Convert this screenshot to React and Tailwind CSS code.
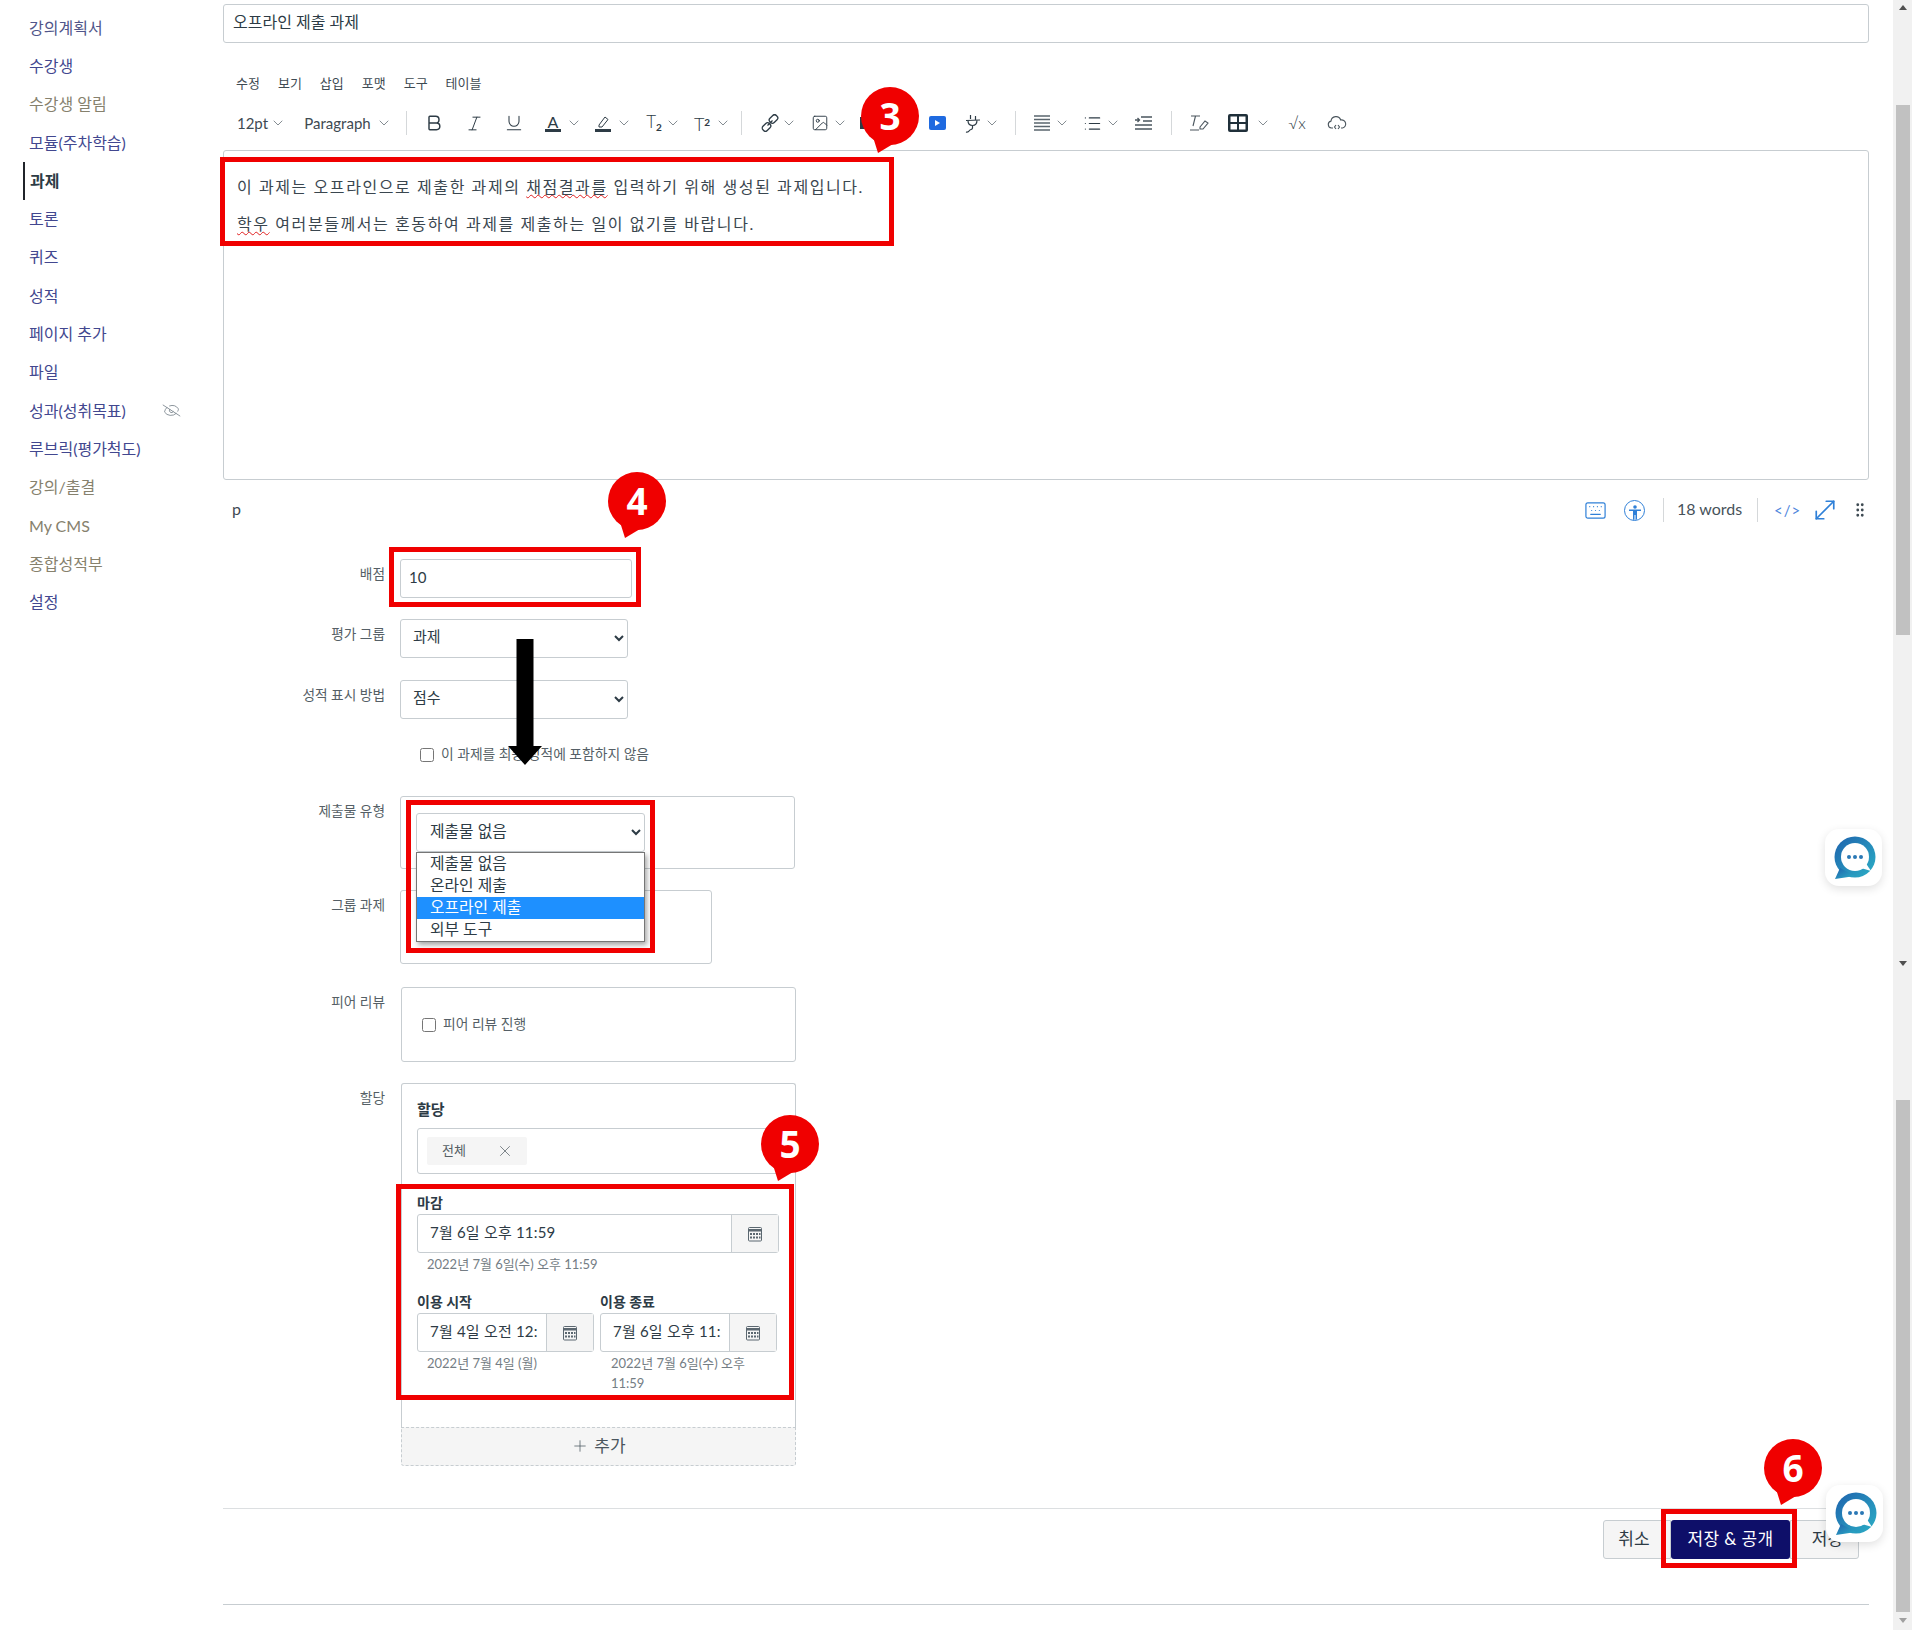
import { Bold, ChevronDown, Italic, Underline, Image, List, EyeOff, Keyboard, MoveDiagonal, GripVertical, X, Plus } from "lucide-react";

const navItems = [
  { label: "강의계획서", color: "text-[#50558a]" },
  { label: "수강생", color: "text-[#42478f]" },
  { label: "수강생 알림", color: "text-[#86816d]" },
  { label: "모듈(주차학습)", color: "text-[#42478f]" },
  { label: "과제", active: true },
  { label: "토론", color: "text-[#42478f]" },
  { label: "퀴즈", color: "text-[#42478f]" },
  { label: "성적", color: "text-[#42478f]" },
  { label: "페이지 추가", color: "text-[#42478f]" },
  { label: "파일", color: "text-[#42478f]" },
  { label: "성과(성취목표)", color: "text-[#42478f]", hidden: true },
  { label: "루브릭(평가척도)", color: "text-[#42478f]" },
  { label: "강의/출결", color: "text-[#86816d]" },
  { label: "My CMS", color: "text-[#86816d]" },
  { label: "종합성적부", color: "text-[#86816d]" },
  { label: "설정", color: "text-[#42478f]" },
];

const menus = ["수정", "보기", "삽입", "포맷", "도구", "테이블"];

// small thin chevron used everywhere in the editor toolbar
const Chev = ({ className }) => (
  <span className={`flex h-full w-[12px] items-center justify-center ${className}`}>
    <ChevronDown size={16} strokeWidth={1} className="shrink-0 text-[#46525a]" />
  </span>
);

const Tool = ({ className, children }) => (
  <span className={`flex h-full w-[20px] items-center justify-center text-[#2d3b45] ${className}`}>{children}</span>
);

const Sep = ({ className }) => <span className={`h-[24px] w-px self-center bg-[#d5d8da] ${className}`} />;

const CalendarIcon = () => (
  <svg width="16" height="16" viewBox="0 0 16 16" className="text-[#5b6770]">
    <rect x="1.500" y="1.500" width="13" height="13.500" rx="1" fill="none" stroke="currentColor" />
    <rect x="1" y="3" width="14" height="2.500" fill="currentColor" />
    <path d="M3 7h2v2H3zM6 7h2v2H6zM9 7h2v2H9zM12 7h1.500v2H12zM3 10.500h2v2H3zM6 10.500h2v2H6zM9 10.500h2v2H9zM12 10.500h1.500v2H12z" fill="currentColor" />
  </svg>
);

const DateField = ({ value, className, btn }) => (
  <div className={`flex h-[39px] rounded-[3px] border border-[#c7cdd1] ${className}`}>
    <div className="flex min-w-0 flex-1 items-center overflow-hidden whitespace-nowrap pb-[2px] pl-[12px] text-[15px] tracking-[0.2px] text-[#2d3b45]">{value}</div>
    <div className={`flex items-center justify-center border-l border-[#c7cdd1] bg-[#f5f5f5] ${btn}`}>
      <CalendarIcon />
    </div>
  </div>
);

const Row = ({ label, className, children }) => (
  <div className={`flex ${className}`}>
    <div className="w-[162px] shrink-0 pt-[5px] text-right text-[13.7px] leading-[20px] text-[#555f66]">{label}</div>
    <div className="ml-[15px]">{children}</div>
  </div>
);

// numbered red speech bubble from the guide annotations
const Badge = ({ n, className }) => (
  <div className={`absolute z-30 h-[66px] w-[58px] ${className}`}>
    <svg width="58" height="66" viewBox="0 0 58 66" className="absolute left-0 top-0">
      <circle cx="29" cy="29" r="29" fill="#f00000" />
      <path d="M12 50L17 66L32 57Z" fill="#f00000" />
    </svg>
    <span className="absolute inset-x-0 top-0 flex h-[58px] items-center justify-center font-['Open_Sans',sans-serif] text-[37px] font-bold text-white">{n}</span>
  </div>
);

const RedBox = ({ className }) => <div className={`absolute z-20 border-[5px] border-[#f00000] ${className}`} />;

const ChatBubble = ({ id, className }) => (
  <div className={`absolute z-40 flex h-[57px] w-[57px] items-center justify-center rounded-[14px] bg-white shadow-[0_3px_10px_rgba(0,0,0,0.12)] ${className}`}>
    <svg width="46" height="46" viewBox="0 0 46 46">
      <defs>
        <linearGradient id={id} x1="0" y1="0" x2="1" y2="1">
          <stop offset="0" stopColor="#1e62ad" />
          <stop offset="1" stopColor="#2cb0c6" />
        </linearGradient>
      </defs>
      <circle cx="24" cy="22" r="20.500" fill={`url(#${id})`} />
      <path d="M9 33L4 44L24 41Z" fill={`url(#${id})`} />
      <circle cx="24" cy="22" r="14" fill="#fff" />
      <path d="M30 33L40 36L34 27Z" fill="#fff" />
      <circle cx="18" cy="22" r="2" fill="#2a78b5" />
      <circle cx="24" cy="22" r="2" fill="#2a78b5" />
      <circle cx="30" cy="22" r="2" fill="#2a78b5" />
    </svg>
  </div>
);

const App = () => {
  return (
    <div className="relative flex h-[1630px] w-[1912px] overflow-hidden bg-white font-[Lato,'Noto_Sans_CJK_KR',sans-serif] text-[#2d3b45]">
      {/* course nav */}
      <nav className="w-[223px] shrink-0 pl-[23px] pt-[8.5px]">
        {navItems.map((item) => (
          <div
            key={item.label}
            className={`flex h-[38.3px] w-[157px] items-center justify-between text-[16px] ${
              item.active ? "border-l-2 border-[#20242a] pl-[5px] font-bold text-[#2d3b45]" : `pl-[6px] ${item.color}`
            }`}
          >
            <span>{item.label}</span>
            {item.hidden && <EyeOff size={17} strokeWidth={1} className="-rotate-12 text-[#6b7780]" />}
          </div>
        ))}
      </nav>

      <main className="w-[1646px] shrink-0">
        <div className="mt-[4px] flex h-[39px] items-center rounded-[3px] border border-[#c7cdd1] pb-[3px] pl-[9px] text-[16px]">오프라인 제출 과제</div>

        <div className="ml-[13px] mt-[31px] flex h-[20px] items-center gap-[18px] text-[13px] text-[#3e4a52]">
          {menus.map((m) => (
            <span key={m}>{m}</span>
          ))}
        </div>

        {/* editor toolbar */}
        <div className="ml-[9px] mt-[14px] flex h-[30px] items-center text-[15px] text-[#3e4a52]">
          <span className="w-[40px] pl-[1px] text-center">12pt</span>
          <Chev />
          <span className="ml-[18px] w-[71px] text-center">Paragraph</span>
          <Chev className="ml-[5px]" />
          <Sep className="ml-[16px]" />
          <Tool className="ml-[17px]"><Bold size={22} strokeWidth={1.75} /></Tool>
          <Tool className="ml-[20px]"><Italic size={19} strokeWidth={1.25} /></Tool>
          <Tool className="ml-[20px]"><Underline size={20} strokeWidth={1.25} /></Tool>
          <Tool className="ml-[19px]">
            <span className="flex flex-col items-center text-[16px] leading-[15px]">
              A<span className="h-[3px] w-[16px] bg-[#2d3b45]" />
            </span>
          </Tool>
          <Chev className="ml-[5px]" />
          <Tool className="ml-[13px]">
            <svg width="18" height="18" viewBox="0 0 18 18" fill="none" stroke="#2d3b45">
              <path d="M5 11L11 3l3 2.500L8 13H5z" />
              <rect x="1" y="15" width="16" height="3" fill="#2d3b45" stroke="none" />
            </svg>
          </Tool>
          <Chev className="ml-[5px]" />
          <Tool className="ml-[14px]">
            <span className="-mt-[3px] text-[17px] font-light leading-none">T<sub className="text-[10px] font-bold">2</sub></span>
          </Tool>
          <Chev className="ml-[3px]" />
          <Tool className="ml-[13px]">
            <span className="mt-[2px] text-[18px] font-light leading-none">T<sup className="text-[10px] font-bold">2</sup></span>
          </Tool>
          <Chev className="ml-[5px]" />
          <Sep className="ml-[12px]" />
          <Tool className="ml-[18px]">
            <svg width="18" height="18" viewBox="0 0 18 18" fill="none" stroke="#2d3b45" strokeWidth="1.300">
              <rect x="9.500" y="0.500" width="6" height="9" rx="2.500" transform="rotate(45 12.500 5)" />
              <rect x="2.500" y="8.500" width="6" height="9" rx="2.500" transform="rotate(45 5.500 13)" />
              <path d="M6.500 11.500l5-5" />
            </svg>
          </Tool>
          <Chev className="ml-[3px]" />
          <Tool className="ml-[15px]"><Image size={18} strokeWidth={1.25} /></Tool>
          <Chev className="ml-[4px]" />
          <Tool className="ml-[12px]"><span className="h-[12px] w-[16px] bg-[#2d3b45]" /></Tool>
          <Tool className="ml-[49px]">
            <span className="flex h-[14px] w-[17px] items-center justify-center rounded-[2px] bg-[#1f6ae0]">
              <span className="border-y-[3px] border-l-[5px] border-y-transparent border-l-white" />
            </span>
          </Tool>
          <Tool className="ml-[15px]">
            <svg width="18" height="19" viewBox="0 0 18 19" fill="none" stroke="#2d3b45" strokeWidth="1.200">
              <path d="M7.500 1v4M12.500 2v4M3 6.500l14-0.500M5 6.500c0 3 1.500 5 4.500 5s4.500-2 4.500-5.500M9.500 11.500v2.500c0 2-2 1-3 2.500s-2 2-3.500 1.500" />
            </svg>
          </Tool>
          <Chev className="ml-[4px]" />
          <Sep className="ml-[17px]" />
          <Tool className="ml-[16px]">
            <svg width="18" height="16" viewBox="0 0 18 16" stroke="#5a656d" strokeWidth="1.300">
              <path d="M1 1h16M1 4.500h16M1 8h16M1 11.500h16M1 15h16" />
            </svg>
          </Tool>
          <Chev className="ml-[4px]" />
          <Tool className="ml-[14px]"><List size={19} strokeWidth={1.5} /></Tool>
          <Chev className="ml-[5px]" />
          <Tool className="ml-[14px]">
            <svg width="18" height="14" viewBox="0 0 18 14" fill="none" stroke="#4a555d" strokeWidth="1.300">
              <path d="M7 1h11M9 5h9M1 9h17M1 13h17M1 4h4M3.500 2l2 2-2 2" />
            </svg>
          </Tool>
          <Sep className="ml-[18px]" />
          <Tool className="ml-[17px]">
            <svg width="20" height="18" viewBox="0 0 20 18" fill="none" stroke="#4a555d" strokeWidth="1.100">
              <path d="M2 2h9M6.500 2L4 12M1 16h9M11 13l5-6 3 2-5 6h-3z" />
            </svg>
          </Tool>
          <Tool className="ml-[19px]">
            <svg width="20" height="18" viewBox="0 0 20 18">
              <rect width="20" height="18" rx="2" fill="#20303a" />
              <path d="M2.500 2.500h6.500V8H2.500zM11 2.500h6.500V8H11zM2.500 10H9v5.500H2.500zM11 10h6.500v5.500H11z" fill="#fff" />
            </svg>
          </Tool>
          <Chev className="ml-[9px]" />
          <Tool className="ml-[18px]"><span className="text-[16px] font-light">√x</span></Tool>
          <Tool className="ml-[20px]">
            <svg width="20" height="17" viewBox="0 0 20 17" fill="none" stroke="#4a555d" strokeWidth="1.100">
              <path d="M6 13H4.500A3.500 3.500 0 0 1 4 6.100 5 5 0 0 1 13.700 5 3.500 3.500 0 0 1 15.500 13H14" />
              <path d="M9 10l-1.500 2L9 14M11 10l1.500 2L11 14" />
            </svg>
          </Tool>
        </div>

        {/* editor body */}
        <div className="mt-[12px] h-[330px] rounded-[3px] border border-[#c7cdd1] pl-[13px] pt-[21px] text-[16px] leading-[30px] tracking-[1.58px] text-[#3a464f]">
          <p className="mb-[7px]">
            이 과제는 오프라인으로 제출한 과제의 <span className="underline decoration-[#e02020] decoration-wavy decoration-1">채점결과를</span> 입력하기 위해 생성된 과제입니다.
          </p>
          <p>
            <span className="underline decoration-[#e02020] decoration-wavy decoration-1">학우</span> 여러분들께서는 혼동하여 과제를 제출하는 일이 없기를 바랍니다.
          </p>
        </div>

        {/* status bar */}
        <div className="mt-[15px] flex h-[30px] items-center text-[#2f80d8]">
          <span className="ml-[9px] pb-[3px] text-[16px] text-[#3e4a52]">p</span>
          <div className="ml-auto flex items-center">
            <Keyboard size={23} strokeWidth={1.25} />
            <span className="ml-[17px] flex h-[21px] w-[21px] items-end justify-center overflow-hidden rounded-full border-[1.5px] border-[#2f80d8]">
              <svg width="14" height="16" viewBox="0 0 14 16" fill="#2f80d8">
                <circle cx="7" cy="3" r="1.800" />
                <path d="M1 5.500h12v1.500H9v9H7.500v-5h-1v5H5V7H1z" />
              </svg>
            </span>
            <Sep className="ml-[18px]" />
            <span className="ml-[13px] w-[67px] whitespace-nowrap pb-[2px] text-[16px] text-[#47525a]">18 words</span>
            <Sep className="ml-[13px]" />
            <span className="ml-[16px] w-[26px] text-center text-[15px] tracking-[1px] text-[#4f86dd]">&lt;/&gt;</span>
            <MoveDiagonal size={30} strokeWidth={1.35} className="ml-[10px]" />
            <GripVertical size={18} strokeWidth={1.75} className="ml-[11px] text-[#3e4a52]" />
          </div>
        </div>

        {/* assignment form */}
        <Row label="배점" className="mt-[34px]">
          <div className="flex h-[39px] w-[232px] items-center rounded-[3px] border border-[#c7cdd1] pb-[2px] pl-[8px] text-[15px]">10</div>
        </Row>
        <Row label="평가 그룹" className="mt-[21px]">
          <select defaultValue="과제" className="h-[39px] w-[228px] rounded-[3px] border border-[#c7cdd1] bg-white pb-[6px] pl-[8px] text-[15px] text-[#2d3b45]">
            <option>과제</option>
          </select>
        </Row>
        <Row label="성적 표시 방법" className="mt-[22px]">
          <select defaultValue="점수" className="h-[39px] w-[228px] rounded-[3px] border border-[#c7cdd1] bg-white pb-[6px] pl-[8px] text-[15px] text-[#2d3b45]">
            <option>점수</option>
          </select>
        </Row>
        <div className="ml-[197px] mt-[29px] flex h-[13px] items-center">
          <input type="checkbox" className="m-0 h-[14px] w-[14px]" />
          <span className="ml-[7px] text-[13.8px] text-[#555f66]">이 과제를 최종 성적에 포함하지 않음</span>
        </div>

        <Row label="제출물 유형" className="mt-[35px]">
          <div className="relative h-[73px] w-[395px] rounded-[3px] border border-[#c7cdd1] pl-[15px] pt-[16px]">
            <select defaultValue="제출물 없음" className="h-[39px] w-[229px] rounded-[3px] border border-[#c7cdd1] bg-white pb-[4px] pl-[9px] text-[15.8px] text-[#2d3b45]">
              <option>제출물 없음</option>
            </select>
            {/* opened select list */}
            <div className="absolute left-[15px] top-[55px] z-10 w-[229px] border border-[#767676] bg-white text-[15.8px] leading-[20px] shadow-[2px_3px_5px_rgba(0,0,0,0.35)]">
              <div className="h-[22px] pl-[13px]">제출물 없음</div>
              <div className="h-[22px] pl-[13px]">온라인 제출</div>
              <div className="h-[22px] bg-[#1e90ff] pl-[13px] text-white">오프라인 제출</div>
              <div className="h-[22px] pl-[13px]">외부 도구</div>
            </div>
          </div>
        </Row>
        <Row label="그룹 과제" className="mt-[21px]">
          <div className="h-[74px] w-[312px] rounded-[3px] border border-[#c7cdd1]" />
        </Row>
        <Row label="피어 리뷰" className="mt-[23px]">
          <div className="ml-px flex h-[75px] w-[395px] items-center rounded-[3px] border border-[#c7cdd1] pl-[20px]">
            <input type="checkbox" className="m-0 h-[14px] w-[14px]" />
            <span className="ml-[7px] text-[13.8px] text-[#555f66]">피어 리뷰 진행</span>
          </div>
        </Row>
        <Row label="할당" className="mt-[21px]">
          <div className="ml-px w-[395px]">
            <div className="h-[344px] rounded-t-[3px] border border-b-0 border-[#c7cdd1] px-[15px] pt-[15px]">
              <div className="h-[20px] text-[15px] font-bold leading-[20px]">할당</div>
              <div className="mt-[9px] flex h-[46px] w-[362px] items-center rounded-[3px] border border-[#c7cdd1] pl-[9px]">
                <div className="flex h-[28px] w-[100px] items-center justify-between rounded-[2px] bg-[#f5f5f5] pl-[15px] pr-[13px] text-[13px] text-[#555f66]">
                  전체
                  <X size={18} strokeWidth={1} />
                </div>
              </div>
              <div className="mt-[21px] h-[16px] text-[14px] font-bold leading-[16px]">마감</div>
              <DateField value="7월 6일 오후 11:59" className="mt-[3px] w-[362px]" btn="w-[47px]" />
              <div className="mt-[3px] pl-[10px] text-[13px] leading-[16px] text-[#747d84]">2022년 7월 6일(수) 오후 11:59</div>
              <div className="mt-[22px] flex items-start gap-[6px]">
                <div className="w-[177px]">
                  <div className="h-[16px] text-[14px] font-bold leading-[16px]">이용 시작</div>
                  <DateField value="7월 4일 오전 12:" className="mt-[3px]" btn="w-[47px]" />
                  <div className="mt-[1px] pl-[10px] text-[13px] leading-[20px] text-[#747d84]">2022년 7월 4일 (월)</div>
                </div>
                <div className="w-[177px]">
                  <div className="h-[16px] text-[14px] font-bold leading-[16px]">이용 종료</div>
                  <DateField value="7월 6일 오후 11:" className="mt-[3px]" btn="w-[47px]" />
                  <div className="mt-[1px] pl-[11px] text-[13px] leading-[20px] text-[#747d84]">2022년 7월 6일(수) 오후 11:59</div>
                </div>
              </div>
            </div>
            <div className="flex h-[39px] items-center justify-center gap-[5px] rounded-b-[3px] border border-dashed border-[#c7cdd1] bg-[#f5f5f5] pb-[2px] text-[17px] text-[#4a555d]">
              <Plus size={18} strokeWidth={1} />
              추가
            </div>
          </div>
        </Row>

        <div className="mt-[42px] h-px bg-[#dcdfe1]" />
        <div className="mt-[11px] flex justify-end pr-[10px]">
          <button className="h-[39px] w-[68px] rounded-l-[3px] border border-[#c7cdd1] bg-[#f5f5f5] pb-[2px] pr-[6px] text-[17px] text-[#2d3b45]">취소</button>
          <button className="h-[39px] w-[119px] rounded-[3px] bg-[#0e0f69] pb-[2px] text-[17px] tracking-[0.4px] text-white">저장 & 공개</button>
          <button className="h-[39px] w-[69px] rounded-r-[3px] border border-[#c7cdd1] bg-[#f5f5f5] pb-[2px] pl-[6px] text-[17px] text-[#2d3b45]">저장</button>
        </div>
        <div className="mt-[45px] h-px bg-[#c7cdd1]" />
      </main>

      {/* browser scrollbar */}
      <div className="ml-[24px] flex h-[1630px] w-[19px] shrink-0 flex-col items-center bg-[#f1f1f1]">
        <span className="mt-[5px] border-x-[4px] border-b-[5px] border-x-transparent border-b-[#505050]" />
        <span className="mt-[95px] h-[530px] w-[14px] bg-[#c1c1c1]" />
        <span className="mt-[326px] border-x-[4px] border-t-[5px] border-x-transparent border-t-[#505050]" />
        <span className="mt-[134px] h-[512px] w-[14px] bg-[#c1c1c1]" />
        <span className="mt-[6px] border-x-[4px] border-t-[5px] border-x-transparent border-t-[#a0a0a0]" />
      </div>

      {/* guide annotations over the page */}
      <RedBox className="left-[220px] top-[157px] h-[89px] w-[674px]" />
      <RedBox className="left-[389px] top-[547px] h-[60px] w-[252px]" />
      <RedBox className="left-[406px] top-[800px] h-[153px] w-[249px]" />
      <RedBox className="left-[396px] top-[1184px] h-[216px] w-[398px]" />
      <RedBox className="left-[1661px] top-[1509px] h-[59px] w-[136px]" />
      <Badge n="3" className="left-[861px] top-[87px]" />
      <Badge n="4" className="left-[608px] top-[472px]" />
      <Badge n="5" className="left-[761px] top-[1115px]" />
      <Badge n="6" className="left-[1764px] top-[1439px]" />
      <svg width="34" height="126" viewBox="0 0 34 126" className="absolute left-[508px] top-[639px] z-20">
        <path d="M8.500 0h17v107H34L17 126 0 107h8.500z" fill="#000" />
      </svg>
      <ChatBubble id="chatA" className="left-[1825px] top-[829px]" />
      <ChatBubble id="chatB" className="left-[1826px] top-[1485px]" />
    </div>
  );
};

export default App;
